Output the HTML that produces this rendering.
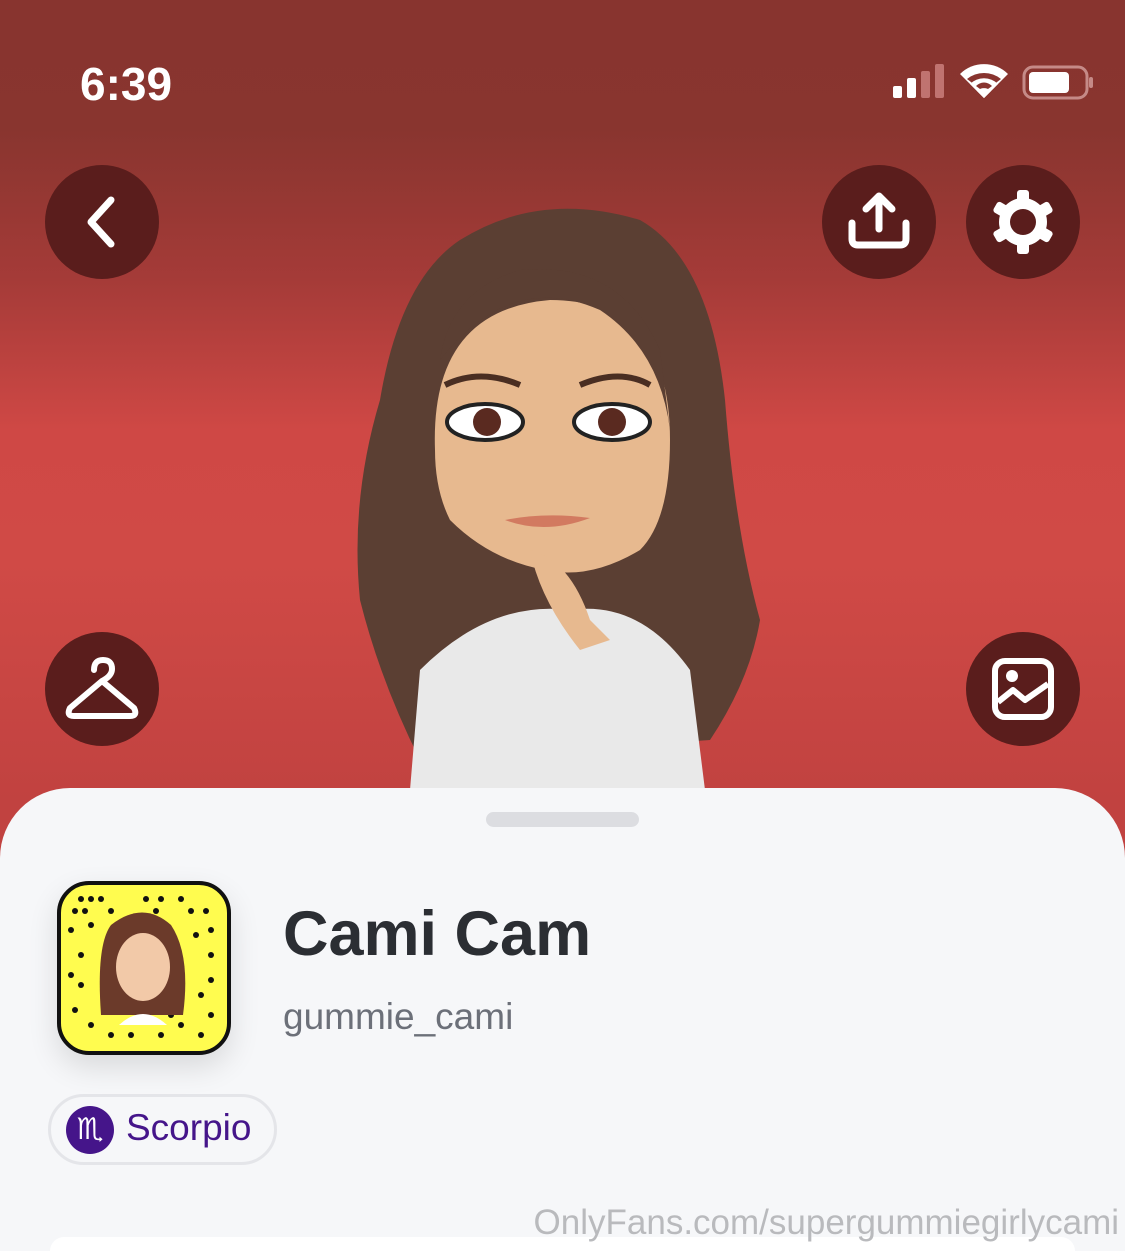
<!DOCTYPE html>
<html><head><meta charset="utf-8"><style>
*{margin:0;padding:0;box-sizing:border-box}
html,body{width:1125px;height:1251px;overflow:hidden}
body{position:relative;font-family:"Liberation Sans",sans-serif;
background:linear-gradient(180deg,#88342f 0px,#89352f 130px,#a53b38 280px,#cf4845 430px,#d04a46 560px,#c14240 800px);}
.btn{position:absolute;width:114px;height:114px;border-radius:50%;background:#5a1d1c;display:flex;align-items:center;justify-content:center}
.sheet{position:absolute;left:0;top:788px;width:1125px;height:463px;background:#f6f7f9;border-radius:70px 70px 0 0}
</style></head><body>
<div style="position:absolute;left:80px;top:57px;color:#fff;font-size:46px;font-weight:700">6:39</div>
<svg style="position:absolute;left:890px;top:62px" width="205" height="40" viewBox="0 0 205 40">
<rect x="3" y="24" width="9" height="12" rx="2" fill="#fff"/><rect x="17" y="16" width="9" height="20" rx="2" fill="#fff"/>
<rect x="31" y="9" width="9" height="27" rx="2" fill="#c07370"/><rect x="45" y="2" width="9" height="34" rx="2" fill="#c07370"/>
<path d="M94 36 L70 12 A34 34 0 0 1 118 12 Z" fill="#fff"/>
<path d="M94 30 L77 17 A27 27 0 0 1 111 17 Z" fill="#88342f"/>
<path d="M94 36 L80 22 A20 20 0 0 1 108 22 Z" fill="#fff"/>
<path d="M94 30 L86 24 A11 11 0 0 1 102 24 Z" fill="#88342f"/>
<path d="M94 36 L87 29 A10 10 0 0 1 101 29 Z" fill="#fff"/>
<rect x="134" y="5" width="63" height="31" rx="9" stroke="#c58a87" stroke-width="3" fill="none"/>
<rect x="139" y="10" width="40" height="21" rx="4" fill="#fff"/><rect x="199" y="15" width="4" height="11" rx="2" fill="#c58a87"/>
</svg>
<svg style="position:absolute;left:340px;top:200px" width="450" height="590" viewBox="0 0 450 590">
<path d="M120 40 Q200 -10 300 20 Q370 60 385 200 Q395 330 420 420 Q410 480 370 540 L80 560 Q40 480 20 400 Q10 300 40 200 Q60 80 120 40Z" fill="#5b3f33"/>
<path d="M70 590 L80 470 Q150 400 230 410 Q300 400 350 470 L365 590Z" fill="#e9e9e9"/>
<path d="M95 250 Q90 110 210 100 Q330 100 330 240 Q330 320 300 350 Q250 380 205 370 Q150 360 110 320 Q95 290 95 250Z" fill="#e7b98f"/>
<path d="M100 160 Q170 70 260 110 Q320 150 330 230 L320 150 Q280 60 180 70 Q110 90 100 160Z" fill="#5b3f33"/>
<ellipse cx="145" cy="222" rx="38" ry="18" fill="#fff" stroke="#222" stroke-width="4"/>
<circle cx="147" cy="222" r="14" fill="#5a2a20"/>
<ellipse cx="272" cy="222" rx="38" ry="18" fill="#fff" stroke="#222" stroke-width="4"/>
<circle cx="272" cy="222" r="14" fill="#5a2a20"/>
<path d="M105 185 Q140 168 180 185" stroke="#4a2e22" stroke-width="6" fill="none"/>
<path d="M240 185 Q280 168 310 185" stroke="#4a2e22" stroke-width="6" fill="none"/>
<path d="M165 320 Q205 335 250 318 Q205 312 165 320Z" fill="#d27a60"/>
<path d="M190 350 Q230 360 250 420 L270 440 L240 450 Q200 400 190 350Z" fill="#e7b98f"/>
</svg>
<div class="btn" style="left:45px;top:165px"><svg width="50" height="60" viewBox="0 0 50 60"><path d="M34 8 L14 30 L34 52" stroke="#fff" stroke-width="7" fill="none" stroke-linecap="round" stroke-linejoin="round"/></svg></div>
<div class="btn" style="left:822px;top:165px"><svg width="70" height="70" viewBox="0 0 70 70"><path d="M35 42 V10 M22 22 L35 9 L48 22" stroke="#fff" stroke-width="7" fill="none" stroke-linecap="round" stroke-linejoin="round"/><path d="M8 36 V52 Q8 58 14 58 H56 Q62 58 62 52 V36" stroke="#fff" stroke-width="7" fill="none" stroke-linecap="round"/></svg></div>
<div class="btn" style="left:966px;top:165px"><svg width="70" height="70" viewBox="0 0 70 70"><g fill="#fff"><circle cx="35" cy="35" r="24"/><g id="t"><rect x="29" y="3" width="12" height="14" rx="3"/><rect x="29" y="53" width="12" height="14" rx="3"/></g><use href="#t" transform="rotate(60 35 35)"/><use href="#t" transform="rotate(120 35 35)"/></g><circle cx="35" cy="35" r="13" fill="#5a1d1c"/></svg></div>
<div class="btn" style="left:45px;top:632px"><svg width="80" height="70" viewBox="0 0 80 70"><path d="M32 16 Q32 6 41 6 Q50 6 50 15 Q50 22 40 27 L8 54 Q4 62 12 62 H68 Q76 62 72 54 L40 27" stroke="#fff" stroke-width="6" fill="none" stroke-linecap="round" stroke-linejoin="round"/></svg></div>
<div class="btn" style="left:966px;top:632px"><svg width="70" height="70" viewBox="0 0 70 70"><rect x="7" y="7" width="56" height="56" rx="10" stroke="#fff" stroke-width="6" fill="none"/><path d="M10 48 L25 36 L37 46 L60 30" stroke="#fff" stroke-width="6" fill="none" stroke-linejoin="round"/><circle cx="24" cy="22" r="6" fill="#fff"/></svg></div>
<div class="sheet"></div>
<div style="position:absolute;left:486px;top:812px;width:153px;height:15px;border-radius:8px;background:#dcdde1"></div>
<div style="position:absolute;left:57px;top:881px;width:174px;height:174px;border-radius:32px;background:#fffc4f;border:4px solid #111;box-shadow:0 12px 30px rgba(0,0,0,.12);overflow:hidden">
<svg width="166" height="166" viewBox="0 0 166 166"><g fill="#111">
<circle cx="20" cy="14" r="3"/><circle cx="30" cy="14" r="3"/><circle cx="40" cy="14" r="3"/><circle cx="85" cy="14" r="3"/><circle cx="100" cy="14" r="3"/><circle cx="120" cy="14" r="3"/>
<circle cx="14" cy="26" r="3"/><circle cx="24" cy="26" r="3"/><circle cx="50" cy="26" r="3"/><circle cx="95" cy="26" r="3"/><circle cx="130" cy="26" r="3"/><circle cx="145" cy="26" r="3"/>
<circle cx="10" cy="45" r="3"/><circle cx="30" cy="40" r="3"/><circle cx="150" cy="45" r="3"/><circle cx="135" cy="50" r="3"/>
<circle cx="20" cy="70" r="3"/><circle cx="150" cy="70" r="3"/><circle cx="10" cy="90" r="3"/><circle cx="20" cy="100" r="3"/><circle cx="150" cy="95" r="3"/><circle cx="140" cy="110" r="3"/>
<circle cx="14" cy="125" r="3"/><circle cx="30" cy="140" r="3"/><circle cx="50" cy="150" r="3"/><circle cx="70" cy="150" r="3"/><circle cx="100" cy="150" r="3"/><circle cx="120" cy="140" r="3"/><circle cx="140" cy="150" r="3"/><circle cx="150" cy="130" r="3"/><circle cx="110" cy="130" r="3"/></g>
<path d="M40 130 Q35 60 50 40 Q82 15 110 40 Q130 70 122 130Z" fill="#6b3a2a"/>
<ellipse cx="82" cy="82" rx="27" ry="34" fill="#f2c9a8"/>
<path d="M58 140 Q82 118 106 140Z" fill="#fff"/></svg></div>
<div style="position:absolute;left:283px;top:898px;font-size:63px;font-weight:700;color:#2b2e33">Cami Cam</div>
<div style="position:absolute;left:283px;top:996px;font-size:37px;color:#6c7079">gummie_cami</div>
<div style="position:absolute;left:48px;top:1094px;width:229px;height:71px;border-radius:36px;border:3px solid #e4e5e9;background:#f6f7f9"></div>
<div style="position:absolute;left:66px;top:1106px;width:48px;height:48px;border-radius:50%;background:#45158a;color:#fff;font-size:30px;text-align:center;line-height:48px;font-family:'DejaVu Sans',sans-serif">♏</div>
<div style="position:absolute;left:126px;top:1107px;font-size:37px;color:#45158a">Scorpio</div>
<div style="position:absolute;left:50px;top:1237px;width:1025px;height:14px;border-radius:24px 24px 0 0;background:#fff"></div>
<div style="position:absolute;right:6px;top:1203px;font-size:35px;color:#b9babd">OnlyFans.com/supergummiegirlycami</div>
</body></html>
